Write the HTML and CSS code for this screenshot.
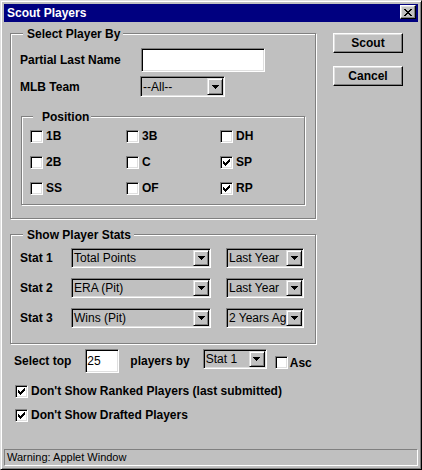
FILE: index.html
```html
<!DOCTYPE html>
<html>
<head>
<meta charset="utf-8">
<title>Scout Players</title>
<link rel="stylesheet" href="styles.css">
</head>
<body>
<div class="window">
  <div class="titlebar">
    <span class="title">Scout Players</span>
    <span class="close-btn"><svg width="8" height="7" viewBox="0 0 8 7" shape-rendering="crispEdges"><path fill="#000" d="M0 0h2v1h-2z M6 0h2v1h-2z M1 1h2v1h-2z M5 1h2v1h-2z M2 2h4v1h-4z M3 3h2v1h-2z M2 4h4v1h-4z M1 5h2v1h-2z M5 5h2v1h-2z M0 6h2v1h-2z M6 6h2v1h-2z"/></svg></span>
  </div>
  <div class="main">
    <div class="left">
      <div class="group group-select">
        <span class="group-title">Select Player By</span>
        <div class="form-grid">
          <span class="label">Partial Last Name</span>
          <span class="textfield tf-name"></span>
          <span class="label">MLB Team</span>
          <div class="choice ch-team"><span class="choice-text">--All--</span><span class="choice-btn"><svg width="7" height="4" viewBox="0 0 7 4" shape-rendering="crispEdges"><path fill="#000" d="M0 0h7v1h-7z M1 1h5v1h-5z M2 2h3v1h-3z M3 3h1v1h-1z"/></svg></span></div>
        </div>
        <div class="group group-pos">
          <span class="group-title title-pos">Position</span>
          <div class="pos-grid">
            <label class="cb-item"><span class="checkbox"></span>1B</label>
            <label class="cb-item"><span class="checkbox"></span>3B</label>
            <label class="cb-item"><span class="checkbox"></span>DH</label>
            <label class="cb-item"><span class="checkbox"></span>2B</label>
            <label class="cb-item"><span class="checkbox"></span>C</label>
            <label class="cb-item"><span class="checkbox"><svg width="7" height="7" viewBox="0 0 7 7" shape-rendering="crispEdges"><path fill="#000" d="M6 0h1v1h-1z M5 1h2v1h-2z M0 2h1v1h-1z M4 2h3v1h-3z M0 3h2v1h-2z M3 3h3v1h-3z M0 4h5v1h-5z M1 5h3v1h-3z M2 6h1v1h-1z"/></svg></span>SP</label>
            <label class="cb-item"><span class="checkbox"></span>SS</label>
            <label class="cb-item"><span class="checkbox"></span>OF</label>
            <label class="cb-item"><span class="checkbox"><svg width="7" height="7" viewBox="0 0 7 7" shape-rendering="crispEdges"><path fill="#000" d="M6 0h1v1h-1z M5 1h2v1h-2z M0 2h1v1h-1z M4 2h3v1h-3z M0 3h2v1h-2z M3 3h3v1h-3z M0 4h5v1h-5z M1 5h3v1h-3z M2 6h1v1h-1z"/></svg></span>RP</label>
          </div>
        </div>
      </div>

      <div class="group group-stats">
        <span class="group-title">Show Player Stats</span>
        <div class="stat-row">
          <span class="label stat-label">Stat 1</span>
          <div class="choice ch-stat"><span class="choice-text">Total Points</span><span class="choice-btn"><svg width="7" height="4" viewBox="0 0 7 4" shape-rendering="crispEdges"><path fill="#000" d="M0 0h7v1h-7z M1 1h5v1h-5z M2 2h3v1h-3z M3 3h1v1h-1z"/></svg></span></div>
          <div class="choice ch-year"><span class="choice-text">Last Year</span><span class="choice-btn"><svg width="7" height="4" viewBox="0 0 7 4" shape-rendering="crispEdges"><path fill="#000" d="M0 0h7v1h-7z M1 1h5v1h-5z M2 2h3v1h-3z M3 3h1v1h-1z"/></svg></span></div>
        </div>
        <div class="stat-row">
          <span class="label stat-label">Stat 2</span>
          <div class="choice ch-stat"><span class="choice-text">ERA (Pit)</span><span class="choice-btn"><svg width="7" height="4" viewBox="0 0 7 4" shape-rendering="crispEdges"><path fill="#000" d="M0 0h7v1h-7z M1 1h5v1h-5z M2 2h3v1h-3z M3 3h1v1h-1z"/></svg></span></div>
          <div class="choice ch-year"><span class="choice-text">Last Year</span><span class="choice-btn"><svg width="7" height="4" viewBox="0 0 7 4" shape-rendering="crispEdges"><path fill="#000" d="M0 0h7v1h-7z M1 1h5v1h-5z M2 2h3v1h-3z M3 3h1v1h-1z"/></svg></span></div>
        </div>
        <div class="stat-row">
          <span class="label stat-label">Stat 3</span>
          <div class="choice ch-stat"><span class="choice-text">Wins (Pit)</span><span class="choice-btn"><svg width="7" height="4" viewBox="0 0 7 4" shape-rendering="crispEdges"><path fill="#000" d="M0 0h7v1h-7z M1 1h5v1h-5z M2 2h3v1h-3z M3 3h1v1h-1z"/></svg></span></div>
          <div class="choice ch-year"><span class="choice-text">2 Years Ago</span><span class="choice-btn"><svg width="7" height="4" viewBox="0 0 7 4" shape-rendering="crispEdges"><path fill="#000" d="M0 0h7v1h-7z M1 1h5v1h-5z M2 2h3v1h-3z M3 3h1v1h-1z"/></svg></span></div>
        </div>
      </div>

      <div class="top-row">
        <span class="label">Select top</span>
        <span class="textfield tf-top">25</span>
        <span class="label players-by">players by</span>
        <div class="choice ch-by"><span class="choice-text">Stat 1</span><span class="choice-btn"><svg width="7" height="4" viewBox="0 0 7 4" shape-rendering="crispEdges"><path fill="#000" d="M0 0h7v1h-7z M1 1h5v1h-5z M2 2h3v1h-3z M3 3h1v1h-1z"/></svg></span></div>
        <label class="cb-item asc"><span class="checkbox"></span>Asc</label>
      </div>
      <label class="cb-item check-row first"><span class="checkbox"><svg width="7" height="7" viewBox="0 0 7 7" shape-rendering="crispEdges"><path fill="#000" d="M6 0h1v1h-1z M5 1h2v1h-2z M0 2h1v1h-1z M4 2h3v1h-3z M0 3h2v1h-2z M3 3h3v1h-3z M0 4h5v1h-5z M1 5h3v1h-3z M2 6h1v1h-1z"/></svg></span>Don't Show Ranked Players (last submitted)</label>
      <label class="cb-item check-row"><span class="checkbox"><svg width="7" height="7" viewBox="0 0 7 7" shape-rendering="crispEdges"><path fill="#000" d="M6 0h1v1h-1z M5 1h2v1h-2z M0 2h1v1h-1z M4 2h3v1h-3z M0 3h2v1h-2z M3 3h3v1h-3z M0 4h5v1h-5z M1 5h3v1h-3z M2 6h1v1h-1z"/></svg></span>Don't Show Drafted Players</label>
    </div>
    <div class="right">
      <div class="btn">Scout</div>
      <div class="btn">Cancel</div>
    </div>
  </div>
  <div class="status">Warning: Applet Window</div>
</div>
</body>
</html>
```

FILE: styles.css
```css
* { box-sizing: border-box; }

body {
  margin: 0;
  background: #c0c0c0;
  font-family: "Liberation Sans", Arial, sans-serif;
  font-size: 12px;
  color: #000;
}

.window {
  width: 422px;
  height: 470px;
  border: 1px solid;
  border-color: #dfdfdf #000 #000 #dfdfdf;
  box-shadow: inset 1px 1px #fff, inset -1px -1px #808080;
  padding: 3px;
  display: flex;
  flex-direction: column;
  background: #c0c0c0;
}

.titlebar {
  height: 18px;
  flex: none;
  background: #000080;
  color: #fff;
  font-weight: bold;
  display: flex;
  align-items: center;
  justify-content: space-between;
  padding: 0 2px 0 3px;
  line-height: 18px;
}

.close-btn {
  align-self: flex-start;
  margin-top: 1px;
  width: 16px;
  height: 14px;
  background: #c0c0c0;
  border: 1px solid;
  border-color: #fff #000 #000 #fff;
  box-shadow: inset -1px -1px #808080, inset 1px 1px #dfdfdf;
  display: flex;
  align-items: center;
  justify-content: center;
}
.close-btn svg { display: block; margin-left: -1px; }

.main {
  flex: 1;
  display: flex;
  padding: 11px 0 0 6px;
  gap: 17px;
}

.left {
  width: 306px;
  display: flex;
  flex-direction: column;
}

.right {
  display: flex;
  flex-direction: column;
  gap: 13px;
}

.label { font-weight: bold; white-space: nowrap; }

.group {
  position: relative;
  border: 1px solid #808080;
  box-shadow: inset 1px 1px #fff, 1px 1px #fff;
}

.group-title {
  position: absolute;
  top: -7px;
  left: 12px;
  padding: 0 3px 0 4px;
  background: #c0c0c0;
  font-weight: bold;
  line-height: 14px;
  white-space: nowrap;
}
.title-pos { left: 11px; padding: 0 2px 0 9px; }

.group-select { padding: 14px 0 13px 9px; }

.form-grid {
  display: grid;
  grid-template-columns: 121px auto;
  grid-template-rows: 24px 21px;
  row-gap: 4px;
  align-items: center;
}

.textfield {
  display: flex;
  align-items: center;
  background: #fff;
  border: 1px solid;
  border-color: #808080 #fff #fff #808080;
  box-shadow: inset 1px 1px #000, inset -1px -1px #dfdfdf;
}
.tf-name { width: 124px; height: 24px; }
.tf-top { width: 34px; height: 24px; padding-left: 1px; }

.choice {
  display: flex;
  align-items: stretch;
  height: 20px;
  border: 1px solid;
  border-color: #808080 #fff #fff #808080;
  box-shadow: inset 1px 1px #000, inset -1px -1px #dfdfdf;
  background: #c0c0c0;
  padding: 1px;
}
.choice-text {
  flex: 1;
  min-width: 0;
  overflow: hidden;
  white-space: nowrap;
  padding-left: 1px;
  display: flex;
  align-items: center;
}
.choice-btn {
  flex: none;
  width: 16px;
  border: 1px solid;
  border-color: #dfdfdf #000 #000 #dfdfdf;
  box-shadow: inset 1px 1px #fff, inset -1px -1px #808080;
  display: flex;
  align-items: center;
  justify-content: center;
}
.choice-btn svg { display: block; }

.ch-team { width: 85px; height: 21px; margin-left: -1px; }
.ch-stat { width: 140px; }
.ch-year { width: 78px; margin-left: 15px; }
.ch-by { width: 64px; margin-left: 13px; align-self: flex-start; }

.group-pos {
  margin: 19px 0 0 1px;
  width: 284px;
  padding: 6px 0 3px 8px;
}

.pos-grid {
  display: grid;
  grid-template-columns: 96px 94px 1fr;
  grid-auto-rows: 26px;
}

.cb-item {
  display: flex;
  align-items: center;
  gap: 3px;
  font-weight: bold;
  white-space: nowrap;
}

.checkbox {
  flex: none;
  width: 13px;
  height: 13px;
  background: #fff;
  border: 1px solid;
  border-color: #808080 #fff #fff #808080;
  box-shadow: inset 1px 1px #000, inset -1px -1px #dfdfdf;
  display: flex;
  align-items: center;
  justify-content: center;
}
.checkbox svg { display: block; }

.group-stats {
  margin-top: 15px;
  padding: 13px 0 15px 9px;
  display: flex;
  flex-direction: column;
  gap: 10px;
}

.stat-row {
  display: flex;
  align-items: center;
  height: 20px;
}
.stat-label { width: 51px; }

.top-row {
  margin-top: 5px;
  height: 24px;
  display: flex;
  align-items: center;
  padding-left: 4px;
}
.top-row .tf-top { margin-left: 14px; }
.players-by { margin-left: 11px; }
.asc { margin-left: 8px; margin-top: 3px; gap: 2px; }

.check-row {
  height: 24px;
  padding-left: 5px;
}
.check-row.first { margin-top: 6px; }

.btn {
  width: 70px;
  height: 20px;
  background: #c0c0c0;
  border: 1px solid;
  border-color: #fff #000 #000 #fff;
  box-shadow: inset -1px -1px #808080, inset 1px 1px #dfdfdf;
  font-weight: bold;
  display: flex;
  align-items: center;
  justify-content: center;
}

.status {
  flex: none;
  height: 17px;
  border: 1px solid;
  border-color: #808080 #fff #fff #808080;
  padding-left: 2px;
  font-size: 11px;
  line-height: 15px;
  white-space: nowrap;
}
```
